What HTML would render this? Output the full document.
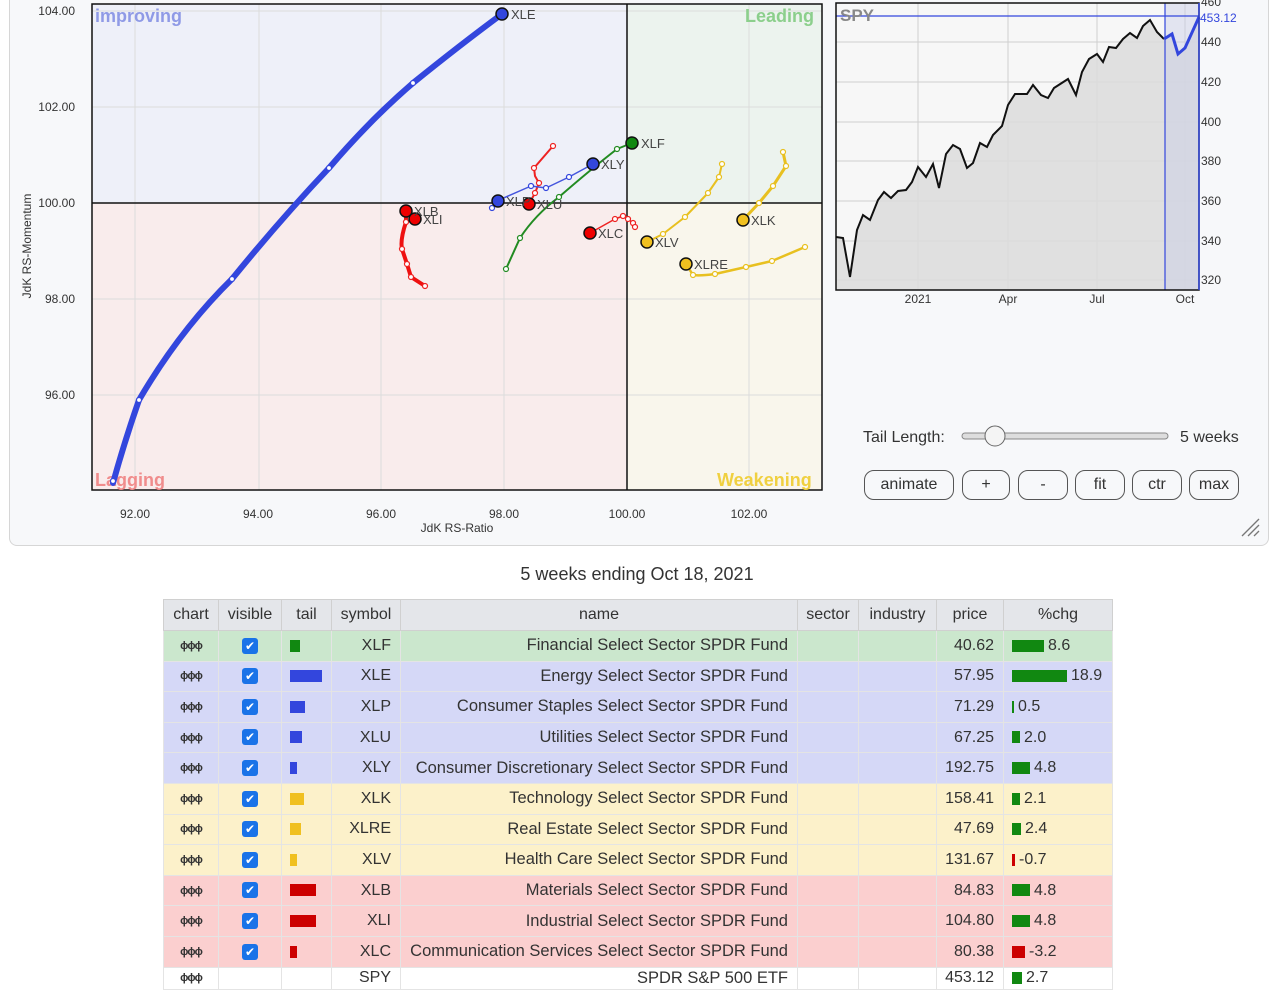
<!DOCTYPE html>
<html><head><meta charset="utf-8"><style>
body{margin:0;width:1274px;height:1000px;background:#fff;font-family:"Liberation Sans",sans-serif;position:relative;overflow:hidden}
.panel{position:absolute;left:9px;top:-10px;width:1258px;height:554px;background:#f7f8fa;border:1px solid #d6d6d6;border-radius:8px}
svg{position:absolute;left:0;top:0}
.btn{position:absolute;top:470px;height:30px;border:1px solid #555;border-radius:10px;box-sizing:border-box;font-size:16px;color:#333;text-align:center;line-height:28px;background:#f7f8fa}
table{position:absolute;left:163px;top:599px;border-collapse:collapse;font-size:16px;color:#333;width:950px;table-layout:fixed}
td,th{border:1px solid #e4e4e4;padding:0 4px;height:30.6px;box-sizing:border-box;white-space:nowrap}
th{background:#e4e6ea;font-weight:normal;height:31px;border-color:#d0d0d0}
.g td{background:#cbe7cd}.b td{background:#d5d8f7}.y td{background:#fcf1ca}.r td{background:#fbcfcf}
.s td{height:22px;line-height:18px}
.c{text-align:center}.rt{text-align:right;padding-right:9px}
.nm{font-size:16.5px}
.cb{display:inline-block;width:16px;height:16px;background:#1a73e8;border-radius:3px;color:#fff;font-size:12px;line-height:16px;text-align:center;vertical-align:middle}
.bar{display:inline-block;height:12px;vertical-align:middle;margin-right:4px}
.tl{padding-left:8px}.pc{padding-left:8px}
.ic{font-size:11px;font-weight:bold;letter-spacing:-1px}
</style></head><body>
<div class="panel"></div>
<svg width="1274" height="560" font-family="Liberation Sans,sans-serif">
<rect x="92" y="4" width="535" height="199" fill="#eef0f9"/>
<rect x="627" y="4" width="195" height="199" fill="#ecf3ee"/>
<rect x="92" y="203" width="535" height="287" fill="#f9ecec"/>
<rect x="627" y="203" width="195" height="287" fill="#f9f6ec"/>
<g stroke="#dcdcdc" stroke-width="1">
<line x1="135" y1="4" x2="135" y2="490"/><line x1="259" y1="4" x2="259" y2="490"/><line x1="381" y1="4" x2="381" y2="490"/><line x1="504" y1="4" x2="504" y2="490"/><line x1="749" y1="4" x2="749" y2="490"/>
<line x1="92" y1="11" x2="822" y2="11"/><line x1="92" y1="107" x2="822" y2="107"/><line x1="92" y1="299" x2="822" y2="299"/><line x1="92" y1="395" x2="822" y2="395"/>
</g>
<line x1="92" y1="203" x2="822" y2="203" stroke="#111" stroke-width="1.5"/>
<line x1="627" y1="4" x2="627" y2="490" stroke="#111" stroke-width="1.5"/>
<rect x="92" y="4" width="730" height="486" fill="none" stroke="#111" stroke-width="1.5"/>
<g font-size="18" font-weight="bold"><text x="95" y="22" fill="#8f9ae6">improving</text><text x="745" y="22" fill="#8ccf8c">Leading</text><text x="95" y="486" fill="#f08c8c">Lagging</text><text x="717" y="486" fill="#f0d040">Weakening</text></g>
<g font-size="12" fill="#333" text-anchor="end"><text x="75" y="15">104.00</text><text x="75" y="111">102.00</text><text x="75" y="207">100.00</text><text x="75" y="303">98.00</text><text x="75" y="399">96.00</text></g>
<g font-size="12" fill="#333" text-anchor="middle"><text x="135" y="518">92.00</text><text x="258" y="518">94.00</text><text x="381" y="518">96.00</text><text x="504" y="518">98.00</text><text x="627" y="518">100.00</text><text x="749" y="518">102.00</text><text x="457" y="532">JdK RS-Ratio</text></g>
<text transform="translate(31,246) rotate(-90)" font-size="12" fill="#333" text-anchor="middle">JdK RS-Momentum</text>
<g fill="none" stroke-linecap="round" stroke-linejoin="round">
<path d="M113,483 Q125,440 139,400 Q180,330 232,279 Q280,220 329,168 Q370,120 413,83 Q460,45 502,14" stroke="#3346dd" stroke-width="6"/>
<path d="M406,211 L406,222 Q400,240 402,249 L407,264 L411,277 L425,286" stroke="#ee1111" stroke-width="4"/>
<path d="M529,204 L535,193 L539,183 L535,176 L534,168 L553,146" stroke="#ee2222" stroke-width="2"/>
<path d="M506,269 L520,238 Q535,215 559,197 Q590,170 617,149 L632,143" stroke="#228b22" stroke-width="2"/>
<path d="M498,201 L492,208 L499,200 L531,186 L546,188 L569,177 L593,164" stroke="#4455dd" stroke-width="1.5"/>
<path d="M590,233 L615,219 L623,216 L628,219 L633,223 L635,227" stroke="#ee2222" stroke-width="1.5"/>
<path d="M647,242 L663,234 L685,217 L708,193 L719,177 L722,164" stroke="#e8c020" stroke-width="2"/>
<path d="M743,220 L759,203 L773,186 L786,166 L783,152" stroke="#e8c020" stroke-width="3"/>
<path d="M686,264 L693,275 Q700,276 715,274 L746,267 L772,261 L805,247" stroke="#e8c020" stroke-width="2.5"/>
</g>
<g fill="#fff" stroke-width="1.2">
<g stroke="#3346dd"><circle cx="113" cy="481" r="2.5"/><circle cx="139" cy="400" r="2.5"/><circle cx="232" cy="279" r="2.5"/><circle cx="329" cy="168" r="2.5"/><circle cx="413" cy="83" r="2.5"/><circle cx="492" cy="208" r="2.5"/><circle cx="531" cy="186" r="2.5"/><circle cx="546" cy="188" r="2.5"/><circle cx="569" cy="177" r="2.5"/></g>
<g stroke="#ee2222"><circle cx="406" cy="222" r="2.5"/><circle cx="402" cy="249" r="2.5"/><circle cx="407" cy="264" r="2.5"/><circle cx="411" cy="277" r="2.5"/><circle cx="425" cy="286" r="2.5"/><circle cx="535" cy="193" r="2.5"/><circle cx="539" cy="183" r="2.5"/><circle cx="534" cy="168" r="2.5"/><circle cx="553" cy="146" r="2.5"/><circle cx="615" cy="219" r="2.5"/><circle cx="623" cy="216" r="2.5"/><circle cx="628" cy="219" r="2.5"/><circle cx="633" cy="223" r="2.5"/><circle cx="635" cy="227" r="2.5"/></g>
<g stroke="#228b22"><circle cx="506" cy="269" r="2.5"/><circle cx="520" cy="238" r="2.5"/><circle cx="559" cy="197" r="2.5"/><circle cx="617" cy="149" r="2.5"/></g>
<g stroke="#e8c020"><circle cx="663" cy="234" r="2.5"/><circle cx="685" cy="217" r="2.5"/><circle cx="708" cy="193" r="2.5"/><circle cx="719" cy="177" r="2.5"/><circle cx="722" cy="164" r="2.5"/><circle cx="759" cy="203" r="2.5"/><circle cx="773" cy="186" r="2.5"/><circle cx="786" cy="166" r="2.5"/><circle cx="783" cy="152" r="2.5"/><circle cx="693" cy="275" r="2.5"/><circle cx="715" cy="274" r="2.5"/><circle cx="746" cy="267" r="2.5"/><circle cx="772" cy="261" r="2.5"/><circle cx="805" cy="247" r="2.5"/></g>
</g>
<g stroke="#111" stroke-width="1.5">
<circle cx="502" cy="14" r="6" fill="#3346dd"/><circle cx="632" cy="143" r="6" fill="#118811"/><circle cx="593" cy="164" r="6" fill="#3346dd"/><circle cx="498" cy="201" r="6" fill="#3346dd"/><circle cx="529" cy="204" r="6" fill="#ee0000"/><circle cx="406" cy="211" r="6" fill="#ee0000"/><circle cx="415" cy="219" r="6" fill="#ee0000"/><circle cx="590" cy="233" r="6" fill="#ee0000"/><circle cx="647" cy="242" r="6" fill="#f0c020"/><circle cx="743" cy="220" r="6" fill="#f0c020"/><circle cx="686" cy="264" r="6" fill="#f0c020"/>
</g>
<g font-size="13" fill="#444"><text x="511" y="19">XLE</text><text x="641" y="148">XLF</text><text x="601" y="169">XLY</text><text x="506" y="206">XLP</text><text x="537" y="209">XLU</text><text x="414" y="216">XLB</text><text x="423" y="224">XLI</text><text x="598" y="238">XLC</text><text x="655" y="247">XLV</text><text x="751" y="225">XLK</text><text x="694" y="269">XLRE</text></g>
<!-- SPY -->
<rect x="836" y="3" width="363" height="287" fill="#f7f7f7"/>
<g stroke="#cfcfcf"><line x1="918" y1="3" x2="918" y2="290"/><line x1="1008" y1="3" x2="1008" y2="290"/><line x1="1097" y1="3" x2="1097" y2="290"/><line x1="1185" y1="3" x2="1185" y2="290"/>
<line x1="836" y1="42" x2="1199" y2="42"/><line x1="836" y1="82" x2="1199" y2="82"/><line x1="836" y1="122" x2="1199" y2="122"/><line x1="836" y1="161" x2="1199" y2="161"/><line x1="836" y1="201" x2="1199" y2="201"/><line x1="836" y1="241" x2="1199" y2="241"/><line x1="836" y1="280" x2="1199" y2="280"/></g>
<path d="M836,237 L843,238 L850,277 L857,230 L863,215 L870,220 L878,200 L884,192 L891,198 L898,191 L906,190 L912,182 L918,167 L926,177 L933,164 L939,188 L946,154 L953,145 L960,149 L967,168 L973,163 L980,143 L987,147 L993,135 L1002,126 L1008,105 L1015,94 L1027,94 L1033,85 L1041,95 L1048,98 L1054,88 L1068,79 L1076,95 L1082,72 L1089,59 L1097,54 L1103,62 L1109,47 L1116,48 L1123,39 L1130,33 L1137,38 L1143,26 L1150,20 L1157,32 L1164,39 L1172,34 L1178,54 L1185,48 L1199,17 L1199,290 L836,290Z" fill="#dcdcdc" opacity=".85"/>
<rect x="1165" y="3" width="34" height="287" fill="#c8cce6" opacity=".45"/>
<path d="M836,237 L843,238 L850,277 L857,230 L863,215 L870,220 L878,200 L884,192 L891,198 L898,191 L906,190 L912,182 L918,167 L926,177 L933,164 L939,188 L946,154 L953,145 L960,149 L967,168 L973,163 L980,143 L987,147 L993,135 L1002,126 L1008,105 L1015,94 L1027,94 L1033,85 L1041,95 L1048,98 L1054,88 L1068,79 L1076,95 L1082,72 L1089,59 L1097,54 L1103,62 L1109,47 L1116,48 L1123,39 L1130,33 L1137,38 L1143,26 L1150,20 L1157,32 L1164,39" fill="none" stroke="#111" stroke-width="2"/>
<path d="M1164,39 L1172,34 L1178,54 L1185,48 L1199,17" fill="none" stroke="#3346dd" stroke-width="3"/>
<line x1="836" y1="16" x2="1199" y2="16" stroke="#3346dd" stroke-width="1.2"/>
<line x1="1165" y1="3" x2="1165" y2="290" stroke="#3346dd" stroke-width="1.2"/>
<rect x="836" y="3" width="363" height="287" fill="none" stroke="#111" stroke-width="1.5"/>
<line x1="1199" y1="3" x2="1199" y2="290" stroke="#3346dd" stroke-width="1.5"/>
<text x="840" y="21" font-size="17" font-weight="bold" fill="#888">SPY</text>
<g font-size="12" fill="#333"><text x="1201" y="46">440</text><text x="1201" y="86">420</text><text x="1201" y="126">400</text><text x="1201" y="165">380</text><text x="1201" y="205">360</text><text x="1201" y="245">340</text><text x="1201" y="284">320</text><text x="1201" y="6">460</text></g>
<text x="1200" y="22" font-size="12" fill="#3346dd">453.12</text>
<g font-size="12" fill="#333" text-anchor="middle"><text x="918" y="303">2021</text><text x="1008" y="303">Apr</text><text x="1097" y="303">Jul</text><text x="1185" y="303">Oct</text></g>
<text x="863" y="442" font-size="16" fill="#333">Tail Length:</text>
<rect x="962" y="433" width="206" height="6" rx="3" fill="#ddd" stroke="#888"/>
<circle cx="995" cy="436" r="10" fill="#f4f4f4" stroke="#666"/>
<text x="1180" y="442" font-size="16" fill="#333">5 weeks</text>
<g stroke="#777" stroke-width="1.3"><line x1="1242" y1="536" x2="1259" y2="519"/><line x1="1248" y1="536" x2="1259" y2="525"/><line x1="1254" y1="536" x2="1259" y2="531"/></g>
</svg>
<div class="btn" style="left:864px;width:90px">animate</div>
<div class="btn" style="left:962px;width:48px">+</div>
<div class="btn" style="left:1018px;width:50px">-</div>
<div class="btn" style="left:1075px;width:50px">fit</div>
<div class="btn" style="left:1132px;width:50px">ctr</div>
<div class="btn" style="left:1189px;width:50px">max</div>
<div style="position:absolute;left:0;width:1274px;top:564px;text-align:center;font-size:18px;color:#333">5 weeks ending Oct 18, 2021</div>
<table>
<colgroup><col style="width:55px"><col style="width:63px"><col style="width:50px"><col style="width:69px"><col style="width:397px"><col style="width:61px"><col style="width:78px"><col style="width:67px"><col></colgroup>
<tr><th>chart</th><th>visible</th><th>tail</th><th>symbol</th><th>name</th><th>sector</th><th>industry</th><th>price</th><th>%chg</th></tr>
<tr class="g"><td class="c ic">ϕϕϕ</td><td class="c"><span class="cb">✔</span></td><td class="tl"><span class="bar" style="width:10px;background:#118811"></span></td><td class="rt">XLF</td><td class="rt nm">Financial Select Sector SPDR Fund</td><td></td><td></td><td class="rt">40.62</td><td class="pc"><span class="bar" style="width:32px;background:#118811"></span>8.6</td></tr>
<tr class="b"><td class="c ic">ϕϕϕ</td><td class="c"><span class="cb">✔</span></td><td class="tl"><span class="bar" style="width:32px;background:#3346dd"></span></td><td class="rt">XLE</td><td class="rt nm">Energy Select Sector SPDR Fund</td><td></td><td></td><td class="rt">57.95</td><td class="pc"><span class="bar" style="width:55px;background:#118811"></span>18.9</td></tr>
<tr class="b"><td class="c ic">ϕϕϕ</td><td class="c"><span class="cb">✔</span></td><td class="tl"><span class="bar" style="width:15px;background:#3346dd"></span></td><td class="rt">XLP</td><td class="rt nm">Consumer Staples Select Sector SPDR Fund</td><td></td><td></td><td class="rt">71.29</td><td class="pc"><span class="bar" style="width:2px;background:#118811"></span>0.5</td></tr>
<tr class="b"><td class="c ic">ϕϕϕ</td><td class="c"><span class="cb">✔</span></td><td class="tl"><span class="bar" style="width:12px;background:#3346dd"></span></td><td class="rt">XLU</td><td class="rt nm">Utilities Select Sector SPDR Fund</td><td></td><td></td><td class="rt">67.25</td><td class="pc"><span class="bar" style="width:8px;background:#118811"></span>2.0</td></tr>
<tr class="b"><td class="c ic">ϕϕϕ</td><td class="c"><span class="cb">✔</span></td><td class="tl"><span class="bar" style="width:7px;background:#3346dd"></span></td><td class="rt">XLY</td><td class="rt nm">Consumer Discretionary Select Sector SPDR Fund</td><td></td><td></td><td class="rt">192.75</td><td class="pc"><span class="bar" style="width:18px;background:#118811"></span>4.8</td></tr>
<tr class="y"><td class="c ic">ϕϕϕ</td><td class="c"><span class="cb">✔</span></td><td class="tl"><span class="bar" style="width:14px;background:#f0c020"></span></td><td class="rt">XLK</td><td class="rt nm">Technology Select Sector SPDR Fund</td><td></td><td></td><td class="rt">158.41</td><td class="pc"><span class="bar" style="width:8px;background:#118811"></span>2.1</td></tr>
<tr class="y"><td class="c ic">ϕϕϕ</td><td class="c"><span class="cb">✔</span></td><td class="tl"><span class="bar" style="width:11px;background:#f0c020"></span></td><td class="rt">XLRE</td><td class="rt nm">Real Estate Select Sector SPDR Fund</td><td></td><td></td><td class="rt">47.69</td><td class="pc"><span class="bar" style="width:9px;background:#118811"></span>2.4</td></tr>
<tr class="y"><td class="c ic">ϕϕϕ</td><td class="c"><span class="cb">✔</span></td><td class="tl"><span class="bar" style="width:7px;background:#f0c020"></span></td><td class="rt">XLV</td><td class="rt nm">Health Care Select Sector SPDR Fund</td><td></td><td></td><td class="rt">131.67</td><td class="pc"><span class="bar" style="width:3px;background:#cc0000"></span>-0.7</td></tr>
<tr class="r"><td class="c ic">ϕϕϕ</td><td class="c"><span class="cb">✔</span></td><td class="tl"><span class="bar" style="width:26px;background:#cc0000"></span></td><td class="rt">XLB</td><td class="rt nm">Materials Select Sector SPDR Fund</td><td></td><td></td><td class="rt">84.83</td><td class="pc"><span class="bar" style="width:18px;background:#118811"></span>4.8</td></tr>
<tr class="r"><td class="c ic">ϕϕϕ</td><td class="c"><span class="cb">✔</span></td><td class="tl"><span class="bar" style="width:26px;background:#cc0000"></span></td><td class="rt">XLI</td><td class="rt nm">Industrial Select Sector SPDR Fund</td><td></td><td></td><td class="rt">104.80</td><td class="pc"><span class="bar" style="width:18px;background:#118811"></span>4.8</td></tr>
<tr class="r"><td class="c ic">ϕϕϕ</td><td class="c"><span class="cb">✔</span></td><td class="tl"><span class="bar" style="width:7px;background:#cc0000"></span></td><td class="rt">XLC</td><td class="rt nm">Communication Services Select Sector SPDR Fund</td><td></td><td></td><td class="rt">80.38</td><td class="pc"><span class="bar" style="width:13px;background:#cc0000"></span>-3.2</td></tr>
<tr class="s"><td class="c ic">ϕϕϕ</td><td></td><td></td><td class="rt">SPY</td><td class="rt nm">SPDR S&amp;P 500 ETF</td><td></td><td></td><td class="rt">453.12</td><td class="pc"><span class="bar" style="width:10px;background:#118811"></span>2.7</td></tr>
</table>
</body></html>
